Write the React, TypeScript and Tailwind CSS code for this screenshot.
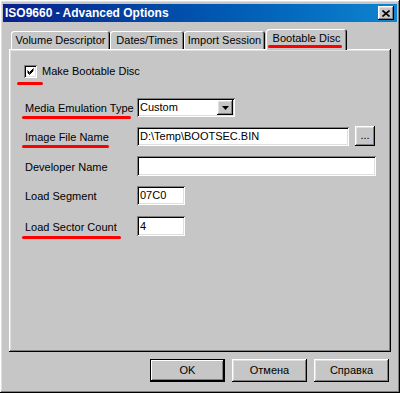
const raised =
  "shadow-[inset_-1px_-1px_#000,inset_1px_1px_#fff,inset_-2px_-2px_#808080,inset_2px_2px_#dfdfdf]";
const sunken =
  "shadow-[inset_1px_1px_#808080,inset_-1px_-1px_#fff,inset_2px_2px_#000,inset_-2px_-2px_#dfdfdf]";

function RedMark({ className }: { className: string }) {
  return <div className={"absolute h-[3px] rounded-full bg-[#ff0000] " + className} />;
}

function Tab({ label, width, selected }: { label: string; width: string; selected?: boolean }) {
  return (
    <div
      className={
        "relative flex justify-center rounded-t-[3px] bg-[#c6c6c6] shadow-[inset_1px_1px_#fff,inset_-1px_0_#000,inset_-2px_0_#808080] " +
        width +
        (selected ? " z-10 h-[21px] -mb-[1px] pt-[4px] ml-[1px]" : " h-[18px] pt-[4px]")
      }
    >
      <span>{label}</span>
      {selected && <RedMark className="left-[2px] top-[16px] w-[74px]" />}
    </div>
  );
}

function Field({ value, className }: { value: string; className: string }) {
  return (
    <div className={"flex items-center bg-white pl-[3px] " + sunken + " " + className}>
      <span>{value}</span>
    </div>
  );
}

function Row({ label, mark, className, children }: { label: string; mark?: string; className: string; children: React.ReactNode }) {
  return (
    <div className={"flex items-center " + className}>
      <div className="relative w-[113px] pl-[1px] pt-[2px]">
        <span>{label}</span>
        {mark && <RedMark className={mark} />}
      </div>
      {children}
    </div>
  );
}

function Button({ label, isDefault }: { label: string; isDefault?: boolean }) {
  return (
    <div
      className={
        "flex h-[23px] w-[75px] items-center justify-center bg-[#c6c6c6] " +
        (isDefault
          ? "shadow-[inset_-1px_-1px_#000,inset_1px_1px_#000,inset_-2px_-2px_#000,inset_2px_2px_#fff,inset_-3px_-3px_#808080]"
          : raised)
      }
    >
      {label}
    </div>
  );
}

export default function App() {
  return (
    <div
      className={
        "flex h-[393px] w-[400px] flex-col bg-[#c6c6c6] p-[3px] text-[11px] leading-none text-black font-['Liberation_Sans',Arial,sans-serif] " +
        raised
      }
    >
      <div className="mt-[1px] flex h-[18px] items-center justify-between bg-gradient-to-r from-[#0a1f8c] to-[#1084d0] pl-[2px] pr-[3px]">
        <span className="text-[12px] font-bold text-white">ISO9660 - Advanced Options</span>
        <div className={"flex h-[14px] w-[16px] items-center justify-center bg-[#c6c6c6] " + raised}>
          <svg width="8" height="7" viewBox="0 0 8 7">
            <path d="M0.5 0.5 L7.5 6.5 M7.5 0.5 L0.5 6.5" stroke="#000" strokeWidth="1.6" />
          </svg>
        </div>
      </div>

      <div className="mt-[7px] flex h-[20px] items-end pl-[8px]">
        <Tab label="Volume Descriptor" width="w-[99px]" />
        <Tab label="Dates/Times" width="w-[74px]" />
        <Tab label="Import Session" width="w-[81px]" />
        <Tab label="Bootable Disc" width="w-[81px]" selected />
      </div>

      <div className={"ml-[6px] flex h-[303px] w-[382px] flex-col pl-[15px] pt-[16px] " + raised}>
        <div className="flex h-[13px] items-center">
          <div className="relative">
            <div className={"flex h-[13px] w-[13px] items-center justify-center bg-white " + sunken}>
              <svg width="7" height="7" viewBox="0 0 7 7">
                <path d="M0.5 2.5 L2.5 4.5 L6.5 0.5 M0.5 3.5 L2.5 5.5 L6.5 1.5 M0.5 4.5 L2.5 6.5 L6.5 2.5" stroke="#000" strokeWidth="1" fill="none" />
              </svg>
            </div>
            <RedMark className="left-[-7px] top-[17px] w-[26px]" />
          </div>
          <span className="ml-[5px]">Make Bootable Disc</span>
        </div>

        <Row label="Media Emulation Type" mark="left-[-2px] top-[15px] w-[109px]" className="mt-[20px] h-[19px]">
          <div className={"flex h-[19px] w-[98px] items-center bg-white p-[2px] " + sunken}>
            <span className="flex-1 pl-[1px]">Custom</span>
            <div className={"flex h-[15px] w-[16px] items-center justify-center bg-[#c6c6c6] " + raised}>
              <svg width="7" height="4" viewBox="0 0 7 4">
                <path d="M0 0 H7 L3.5 4 Z" fill="#000" />
              </svg>
            </div>
          </div>
        </Row>

        <Row label="Image File Name" mark="left-[-2px] top-[15px] w-[87px]" className="mt-[9px] h-[20px]">
          <Field value="D:\Temp\BOOTSEC.BIN" className="h-[19px] w-[212px]" />
          <div className={"ml-[6px] flex h-[20px] w-[20px] items-end justify-center pb-[5px] bg-[#c6c6c6] " + raised}>
            ...
          </div>
        </Row>

        <Row label="Developer Name" className="mt-[10px] h-[20px]">
          <Field value="" className="h-[20px] w-[239px]" />
        </Row>

        <Row label="Load Segment" className="mt-[10px] h-[19px]">
          <Field value="07C0" className="h-[19px] w-[48px]" />
        </Row>

        <Row label="Load Sector Count" mark="left-[-2px] top-[16px] w-[99px]" className="mt-[11px] h-[20px]">
          <Field value="4" className="h-[20px] w-[48px]" />
        </Row>
      </div>

      <div className="mt-[7px] flex justify-end gap-[7px] pr-[8px]">
        <Button label="OK" isDefault />
        <Button label="Отмена" />
        <Button label="Справка" />
      </div>
    </div>
  );
}
